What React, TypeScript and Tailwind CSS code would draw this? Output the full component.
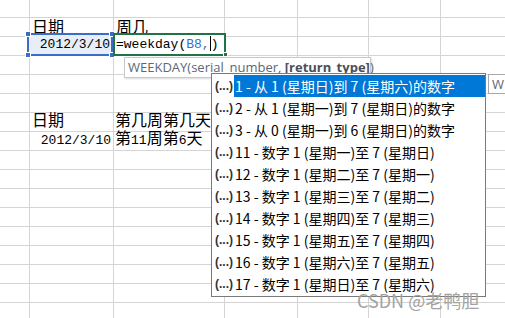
import React from 'react';

const colWidths = [30, 84, 111, 73, 71, 72, 72];
const rowHeights = [18, 19, 19, 19, 19, 19, 19, 19, 19, 19, 19, 19, 19, 19, 19, 19, 19];

const mono = { fontFamily: '"Liberation Mono", "DejaVu Sans Mono", monospace' };

const items = [
  '1 - 从 1 (星期日)到 7 (星期六)的数字',
  '2 - 从 1 (星期一)到 7 (星期日)的数字',
  '3 - 从 0 (星期一)到 6 (星期日)的数字',
  '11 - 数字 1 (星期一)至 7 (星期日)',
  '12 - 数字 1 (星期二)至 7 (星期一)',
  '13 - 数字 1 (星期三)至 7 (星期二)',
  '14 - 数字 1 (星期四)至 7 (星期三)',
  '15 - 数字 1 (星期五)至 7 (星期四)',
  '16 - 数字 1 (星期六)至 7 (星期五)',
  '17 - 数字 1 (星期日)至 7 (星期六)',
];

const Cell = ({ row, col }: { row: number; col: number }) => {
  let content: React.ReactNode = null;
  let align = 'justify-start';

  if (col === 1 && (row === 1 || row === 6)) content = <span className="pl-[2px]">日期</span>;
  if (col === 2 && row === 1) content = <span className="pl-[2px]">周几</span>;
  if (col === 2 && row === 6) content = <span className="pl-[1px]">第几周第几天</span>;
  if (col === 1 && row === 7) {
    content = <span className="pr-[2px] text-[13px]" style={mono}>2012/3/10</span>;
    align = 'justify-end';
  }
  if (col === 2 && row === 7) {
    content = (
      <span className="pl-[1px]">
        第<span className="text-[13px]" style={mono}>11</span>周第<span className="text-[13px]" style={mono}>6</span>天
      </span>
    );
  }

  return (
    <div
      className={`flex items-end ${align} ${row === 6 ? 'pb-[4px]' : 'pb-[2px]'} border-r border-b border-[#d4d4d4] overflow-visible whitespace-nowrap leading-[15px] shrink-0`}
      style={{ width: colWidths[col], height: rowHeights[row] }}
    >
      {content}
    </div>
  );
};

const Handle = ({ className }: { className: string }) => (
  <div className={`absolute w-[6px] h-[6px] bg-[#3b6cc6] border border-white ${className}`} />
);

export default function App() {
  return (
    <div
      className="relative w-[505px] h-[318px] overflow-hidden bg-white text-black"
      style={{ fontFamily: '"Noto Sans CJK SC", "DejaVu Sans", sans-serif' }}
    >
      {/* grid */}
      <div className="flex flex-col text-[16px]">
        {rowHeights.map((_, r) => (
          <div key={r} className="flex">
            {colWidths.map((_, c) => (
              <Cell key={c} row={r} col={c} />
            ))}
          </div>
        ))}
      </div>

      {/* selected cell B */}
      <div className="absolute left-[27px] top-[33px] w-[86px] h-[23px] border-2 border-[#3b6cc6] bg-[#e8eef8] flex items-end justify-end pb-[1px]">
        <span className="pr-[1px] text-[13px] leading-[16px]" style={mono}>2012/3/10</span>
      </div>
      <Handle className="left-[25px] top-[31px]" />
      <Handle className="left-[25px] top-[52px]" />
      <Handle className="left-[109px] top-[31px]" />
      <Handle className="left-[109px] top-[52px]" />

      {/* editing cell C */}
      <div className="absolute left-[113px] top-[33px] w-[113px] h-[23px] border-2 border-[#217346] bg-white flex items-end pb-[1px]">
        <span className="pl-[1px] text-[13px] leading-[16px] whitespace-nowrap" style={mono}>
          =weekday(<span className="text-[#3d6fc6]">B8,</span>
          <span className="inline-block w-px h-[15px] bg-black align-[-3px]" />)
        </span>
      </div>
      <div className="absolute left-[223px] top-[52px] w-[5px] h-[5px] bg-[#217346] border border-white" />

      {/* function tooltip */}
      <div
        className="absolute left-[124px] top-[57px] w-[247px] h-[21px] bg-white border border-[#c8c8c8] shadow-[1px_1px_2px_rgba(0,0,0,0.15)] pl-[3px] text-[13px] leading-[19px] text-[#5c6778] whitespace-nowrap"
        style={{ fontFamily: '"Open Sans", "Liberation Sans", sans-serif' }}
      >
        WEEKDAY(serial_number, <span className="font-bold text-[#4a4f5a]">[return_type]</span>)
      </div>

      {/* dropdown */}
      <div className="absolute left-[211px] top-[73px] w-[275px] bg-white border border-[#7a7a7a] flex flex-col py-px">
        {items.map((t, i) => (
          <div key={i} className="flex h-[22px] items-center">
            <div
              className="w-[22px] shrink-0 pl-[3px] text-[12px] font-bold text-[#333] leading-none"
              style={{ fontFamily: '"Liberation Sans", sans-serif' }}
            >
              (...)
            </div>
            <div
              className={`flex-1 h-full flex items-center pl-[1px] text-[14px] whitespace-nowrap ${
                i === 0 ? 'bg-[#0078d7] text-white' : 'text-black'
              }`}
            >
              {t}
            </div>
          </div>
        ))}
      </div>

      {/* side tip */}
      <div
        className="absolute left-[488px] top-[74px] w-[30px] h-[20px] bg-white border border-[#a8a8a8] pl-[3px] text-[13px] leading-[18px] text-[#5c6778]"
        style={{ fontFamily: '"Open Sans", "Liberation Sans", sans-serif' }}
      >
        W
      </div>

      {/* watermark */}
      <div className="absolute left-[357px] top-[290px] text-[18px] leading-[20px] text-[#a3a3a3] whitespace-nowrap">
        CSDN @老鸭胆
      </div>
    </div>
  );
}
